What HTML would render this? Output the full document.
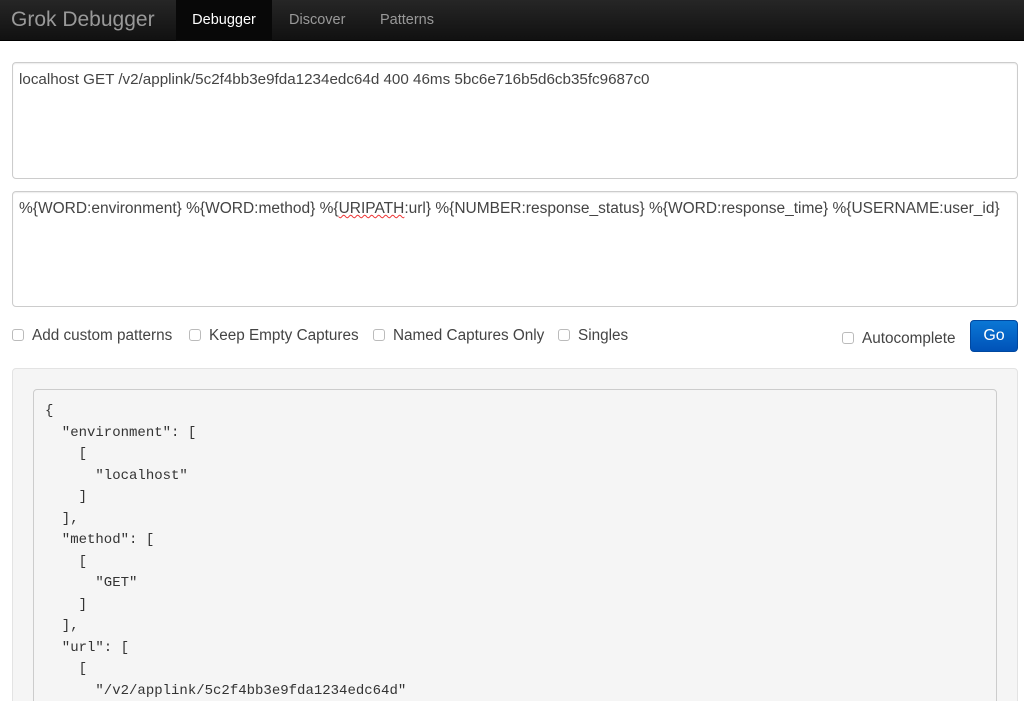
<!DOCTYPE html>
<html style="width:1024px;height:701px;overflow:hidden"><head><meta charset="utf-8"><style>
*{box-sizing:border-box;margin:0;padding:0}
body{width:1024px;height:701px;overflow:hidden;background:#fff;font-family:"Liberation Sans",Arial,sans-serif;color:#333;position:relative}
.nav{position:absolute;left:0;top:0;width:1024px;height:41px;background:linear-gradient(#262626,#111);border-bottom:1px solid #000}
.brand{position:absolute;left:11px;top:8px;font-size:21px;color:#999}
.tab{position:absolute;top:0;height:41px;line-height:40px;font-size:14.5px;color:#999}
.tab.active{background:#080808;color:#fff}
.ta{position:absolute;left:12px;width:1006px;border:1px solid #ccc;border-radius:4px;background:#fff;padding:8px 6px;font-size:15.2px;color:#444;box-shadow:inset 0 1px 1px rgba(0,0,0,.075);white-space:nowrap;overflow:hidden}
.cb{position:absolute;top:327px;font-size:15.3px;color:#444}
.cb i{display:inline-block;width:12px;height:12px;border:1px solid #bbb;border-radius:3px;vertical-align:-1px;margin-right:8px;background:#fff}
.go{position:absolute;left:970px;top:320px;width:48px;height:32px;border-radius:4px;background:linear-gradient(#0a77d5,#0052b8);color:#fff;font-size:16px;text-align:center;line-height:30px;border:1px solid #0048a0}
.well{position:absolute;left:12px;top:368px;width:1006px;height:340px;background:#f5f5f5;border:1px solid #e3e3e3;border-radius:4px}
pre{position:absolute;left:33px;top:389px;width:964px;height:320px;overflow:hidden;background:#f5f5f5;border:1px solid #ccc;border-radius:4px;padding:11px 11px;font-family:"Liberation Mono",monospace;font-size:14px;line-height:21.5px;color:#333}
.sp{text-decoration:underline wavy #e33;text-decoration-thickness:1px}
</style></head><body>
<div class="nav">
<div class="brand">Grok Debugger</div>
<div class="tab active" style="left:176px;width:96px;text-align:center">Debugger</div>
<div class="tab" style="left:289px">Discover</div>
<div class="tab" style="left:380px">Patterns</div>
</div>
<div class="ta" style="top:62px;height:117px">localhost GET /v2/applink/5c2f4bb3e9fda1234edc64d 400 46ms 5bc6e716b5d6cb35fc9687c0</div>
<div class="ta" style="top:191px;height:116px;font-size:15.5px">%{WORD:environment} %{WORD:method} %{<span class="sp">URIPATH</span>:url} %{NUMBER:response_status} %{WORD:response_time} %{USERNAME:user_id}</div>
<div class="cb" style="left:12px"><i></i>Add custom patterns</div>
<div class="cb" style="left:189px"><i></i>Keep Empty Captures</div>
<div class="cb" style="left:373px"><i></i>Named Captures Only</div>
<div class="cb" style="left:558px"><i></i>Singles</div>
<div class="cb" style="left:842px;top:330px"><i></i>Autocomplete</div>
<div class="go">Go</div>
<div class="well"></div>
<pre>{
  "environment": [
    [
      "localhost"
    ]
  ],
  "method": [
    [
      "GET"
    ]
  ],
  "url": [
    [
      "/v2/applink/5c2f4bb3e9fda1234edc64d"
    ]
  ],</pre>
</body></html>
